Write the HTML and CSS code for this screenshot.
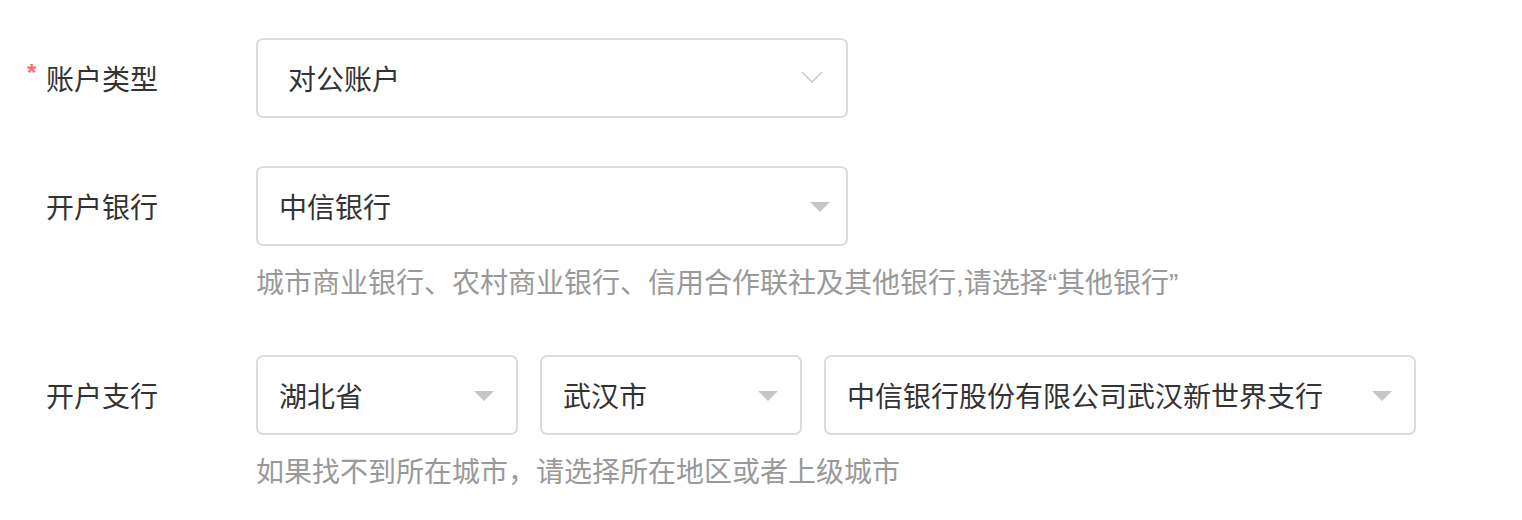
FILE: index.html
```html
<!DOCTYPE html>
<html lang="zh-CN">
<head>
    <meta charset="UTF-8">
    <title>开户信息</title>
    <link rel="stylesheet" href="styles.css">
</head>

<body>

    <div class="form">
        <div class="form-item row-type">
            <div class="label"><span class="star">*</span>账户类型</div>
            <div class="control">
                <div class="select select-line">
                    <span class="value">对公账户</span>
                    <svg class="chevron" width="22" height="12" viewBox="0 0 22 12">
                        <path d="M1 1 L11 11 L21 1" fill="none" stroke="#c8cbd2" stroke-width="1.6"/>
                    </svg>
                </div>
            </div>
        </div>

        <div class="form-item row-bank">
            <div class="label"><span class="star"></span>开户银行</div>
            <div class="control">
                <div class="select select-wide tri-near">
                    <span class="value">中信银行</span>
                    <span class="tri"></span>
                </div>
                <div class="hint">城市商业银行、农村商业银行、信用合作联社及其他银行,请选择“其他银行”</div>
            </div>
        </div>

        <div class="form-item row-branch">
            <div class="label"><span class="star"></span>开户支行</div>
            <div class="control">
                <div class="select-group">
                    <div class="select select-small">
                        <span class="value">湖北省</span>
                        <span class="tri"></span>
                    </div>
                    <div class="select select-small">
                        <span class="value">武汉市</span>
                        <span class="tri"></span>
                    </div>
                    <div class="select select-wide">
                        <span class="value">中信银行股份有限公司武汉新世界支行</span>
                        <span class="tri"></span>
                    </div>
                </div>
                <div class="hint">如果找不到所在城市，请选择所在地区或者上级城市</div>
            </div>
        </div>
    </div>

</body>
</html>
```

FILE: styles.css
```css
body {
    margin: 0;
    font-family: 'Liberation Sans', 'Noto Sans CJK SC', sans-serif;
    background-color: #fff;
    color: #333;
}
.form {
    padding: 38px 0 0 0;
}
.form-item {
    display: flex;
    align-items: flex-start;
}
.row-type {
    margin-bottom: 48px;
}
.row-bank {
    margin-bottom: 51px;
}
.label {
    width: 229px;
    padding-left: 27px;
    height: 80px;
    display: flex;
    align-items: center;
    font-size: 28px;
    color: #333;
}
.star {
    display: inline-block;
    width: 19px;
    color: #f56c6c;
    font-size: 24px;
    font-weight: bold;
    line-height: 1;
    margin-top: -10px;
}
.select {
    box-sizing: border-box;
    height: 80px;
    border: 2px solid #dcdcdc;
    border-radius: 7px;
    background: #fff;
    display: flex;
    align-items: center;
    justify-content: space-between;
    padding: 0 22px 0 21px;
    font-size: 28px;
    color: #333;
}
.select-wide {
    width: 592px;
}
.select-small {
    width: 262px;
}
.select-line {
    width: 592px;
    padding: 0 23px 0 30px;
}
.chevron {
    display: block;
    margin-top: -2px;
}
.tri {
    width: 0;
    height: 0;
    border-left: 10px solid transparent;
    border-right: 10px solid transparent;
    border-top: 10px solid #c6c6c6;
    margin-top: 2px;
}
.tri-near {
    padding-right: 16px;
}
.select-group {
    display: flex;
    gap: 22px;
}
.hint {
    margin-top: 18px;
    line-height: 40px;
    font-size: 28px;
    color: #999;
}
```
